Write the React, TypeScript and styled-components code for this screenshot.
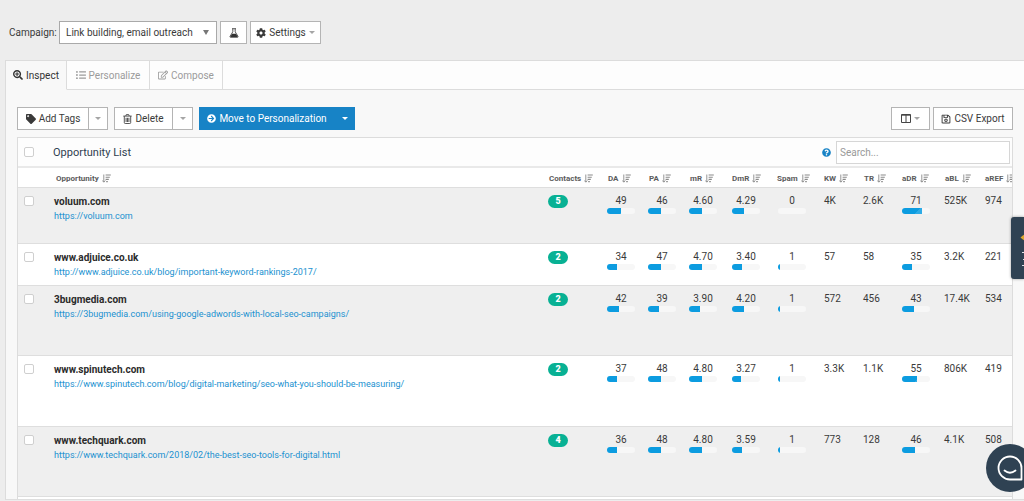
import React from 'react';
import styled, { createGlobalStyle } from 'styled-components';
import {
  FaArrowCircleRight,
  FaCog,
  FaListUl,
  FaQuestionCircle,
  FaRegEdit,
  FaRegSave,
  FaSearchPlus,
  FaTag,
} from 'react-icons/fa';

const GlobalStyle = createGlobalStyle`
  *, *::before, *::after { box-sizing: border-box; }
  body { margin: 0; background: #ededed; overflow: hidden; }
  body, button, input, select { font-family: Roboto, "Liberation Sans", sans-serif; font-size: 10px; color: #3a3a3a; }
  button, input, select { margin: 0; padding: 0; }
  svg { display: block; flex: none; }
`;

const Page = styled.div`
  display: flex;
  flex-direction: column;
`;

const CampaignBar = styled.header`
  display: flex;
  align-items: center;
  gap: 3px;
  padding: 21px 9px 16px;
`;

const CampaignLabel = styled.label`
  width: 47px;
  white-space: nowrap;
`;

const SelectBox = styled.div`
  display: flex;
  align-items: center;
  width: 158px;
  height: 23px;
  padding: 0 7px 0 6px;
  border: 1px solid #a9a9a9;
  background: #fff;
`;

const Select = styled.select`
  flex: 1;
  min-width: 0;
  appearance: none;
  border: 0;
  background: transparent;
  outline: 0;
`;

const Button = styled.button<{ $primary?: boolean; $joined?: boolean; $width?: number }>`
  display: flex;
  align-items: center;
  justify-content: center;
  gap: 3px;
  height: 23px;
  width: ${(p) => (p.$width ? `${p.$width}px` : 'auto')};
  border: 1px solid ${(p) => (p.$primary ? '#1783c6' : '#b4b4b4')};
  margin-left: ${(p) => (p.$joined ? '-1px' : '0')};
  background: ${(p) => (p.$primary ? '#1783c6' : '#fff')};
  color: ${(p) => (p.$primary ? '#fff' : '#3a3a3a')};
  white-space: nowrap;
`;

const ButtonGroup = styled.div`
  display: flex;
`;

const Caret = styled.span<{ $color?: string }>`
  border: 3px solid transparent;
  border-top-color: ${(p) => p.$color ?? '#a5a5a5'};
  border-bottom: 0;
`;

const SelectCaret = styled(Caret)`
  border-top-width: 5px;
`;

const Tabs = styled.nav`
  display: flex;
  margin-left: 5px;
  border-top: 1px solid #dcdcdc;
  border-left: 1px solid #dcdcdc;
  background: #fdfdfd;
`;

const Tab = styled.button<{ $active?: boolean; $width: number }>`
  display: flex;
  align-items: center;
  justify-content: center;
  gap: 3px;
  width: ${(p) => p.$width}px;
  height: 29px;
  border: 0;
  border-right: 1px solid #dcdcdc;
  border-bottom: 1px solid ${(p) => (p.$active ? '#f8f8f8' : '#dcdcdc')};
  background: ${(p) => (p.$active ? '#f8f8f8' : '#fdfdfd')};
  color: ${(p) => (p.$active ? '#333' : '#9b9b9b')};
`;

const TabFill = styled.div`
  flex: 1;
  border-bottom: 1px solid #dcdcdc;
`;

const Content = styled.main`
  margin-left: 5px;
  padding: 17px 11px 0;
  border-left: 1px solid #dcdcdc;
  border-bottom: 1px solid #dedede;
  background: #f8f8f8;
`;

const Toolbar = styled.div`
  display: flex;
  gap: 6px;
  margin-bottom: 7px;
`;

const ToolbarEnd = styled.div`
  display: flex;
  gap: 3px;
  margin-left: auto;
`;

const Panel = styled.section`
  overflow: hidden;
  padding-bottom: 2px;
  border: 1px solid #dcdcdc;
  border-bottom: 0;
  background: #fff;
`;

const PanelHead = styled.div`
  display: flex;
  align-items: center;
  height: 30px;
  padding: 0 2px 0 6px;
  border-bottom: 2px solid #e9e9e9;
  background: #fdfdfd;
`;

const PanelTitle = styled.h1`
  flex: 1;
  margin: 0 0 0 19px;
  font-size: 11px;
  font-weight: 400;
  color: #2f4050;
`;

const Search = styled.input`
  width: 174px;
  height: 23px;
  margin-left: 5px;
  padding: 0 3px;
  border: 1px solid #d6d6d6;
  background: #fff;
  outline: 0;
  &::placeholder { color: #999; opacity: 1; }
`;

const Help = styled.button`
  border: 0;
  background: none;
  svg { color: #1783c6; }
`;

const Checkbox = styled.input`
  display: block;
  appearance: none;
  width: 10px;
  height: 10px;
  border: 1px solid #cfcfcf;
  border-radius: 2px;
  background: #fff;
`;

const Table = styled.table`
  width: 100%;
  table-layout: fixed;
  border-collapse: separate;
  border-spacing: 0;
  border-bottom: 1px solid #dedede;
`;

const Col = styled.col<{ $width?: number }>`
  width: ${(p) => (p.$width ? `${p.$width}px` : 'auto')};
`;

const HeadCell = styled.th<{ $inset?: number }>`
  height: 19px;
  padding: 2px 0 0 ${(p) => p.$inset ?? 6}px;
  overflow: hidden;
`;

const HeadLabel = styled.div`
  display: flex;
  align-items: center;
  gap: 3px;
  font-size: 8px;
  line-height: 12px;
  font-weight: 700;
  color: #5c5c5c;
  white-space: nowrap;
`;

const Row = styled.tr<{ $shaded?: boolean; $height: number }>`
  height: ${(p) => p.$height}px;
  background: ${(p) => (p.$shaded ? '#efefef' : '#fff')};
`;

const Cell = styled.td<{ $check?: boolean }>`
  padding: ${(p) => (p.$check ? '8px 0 0 6px' : '6px 0 0 5px')};
  border-top: 1px solid #dedede;
  vertical-align: top;
  line-height: 14px;
  white-space: nowrap;
`;

const Site = styled.div`
  padding-left: 1px;
  line-height: 15px;
  font-weight: 700;
  color: #2b2b2b;
`;

const SiteLink = styled.a`
  display: block;
  padding-left: 1px;
  font-size: 9px;
  color: #2191d0;
  text-decoration: none;
`;

const Pill = styled.span`
  display: block;
  width: 20px;
  height: 13px;
  margin-top: 1px;
  border-radius: 7px;
  background: #08b194;
  color: #fff;
  font-size: 9px;
  line-height: 13px;
  font-weight: 900;
  text-align: center;
`;

const Gauge = styled.div`
  width: 28px;
  text-align: center;
`;

const Track = styled.div`
  height: 6px;
  border-radius: 3px;
  background: #f7f7f7;
  overflow: hidden;
`;

const Fill = styled.div`
  height: 6px;
  background: linear-gradient(135deg, #0c9ce0 13px, #2eabe6 13px);
`;

const SideTab = styled.button`
  position: fixed;
  right: 0;
  top: 217px;
  width: 13px;
  height: 62px;
  border: 0;
  border-radius: 3px 0 0 3px;
  background: #2f4253;
  box-shadow: 0 0 3px rgba(0, 0, 0, 0.4);
`;

const ChatButton = styled.button`
  position: fixed;
  right: -10px;
  top: 444px;
  width: 48px;
  height: 48px;
  padding-left: 11px;
  border: 0;
  border-radius: 50%;
  background: #2f4253;
`;

const SortIcon = () => (
  <svg width="9" height="9" viewBox="0 0 9 9" fill="none" stroke="#8a8a8a">
    <path d="M1.8 0.5V8M0.3 6.5L1.8 8.2L3.3 6.5" strokeWidth="0.9" />
    <path d="M3.6 1H8.8M3.6 3.2H7.8M3.6 5.4H6.8M4.2 7.6H5.8" strokeWidth="1.1" />
  </svg>
);

const FlaskIcon = () => (
  <svg width="10" height="10" viewBox="0 0 10 10">
    <path d="M3 .7H7M3.8.7V3.8L1 8.4Q.7 9.3 1.6 9.3H8.4Q9.3 9.3 9 8.4L6.2 3.8V.7" fill="none" stroke="#333" strokeWidth="0.8" />
    <path d="M3 5.8H7L8.8 9H1.2Z" fill="#333" />
  </svg>
);

const TrashIcon = () => (
  <svg width="9" height="10" viewBox="0 0 9 10" fill="none" stroke="#444" strokeWidth="0.9">
    <path d="M.3 2.1H8.7M2.8 2L3.3.6H5.7L6.2 2M1.3 2.1V8.6Q1.3 9.5 2.2 9.5H6.8Q7.7 9.5 7.7 8.6V2.1M3.1 3.8V8M4.5 3.8V8M5.9 3.8V8" />
  </svg>
);

const ColumnsIcon = () => (
  <svg width="10" height="9" viewBox="0 0 10 9" fill="none" stroke="#444">
    <path d="M.5.5H9.500V8.500H.5ZM5 .5V8.500M.5 1.2H9.500" />
  </svg>
);

const ChatIcon = () => (
  <svg width="26" height="26" viewBox="0 0 26 26" fill="none" stroke="#fff" strokeWidth="1.800">
    <path d="M13 1.5A11.5 11.5 0 1 0 13 24.5H24.5V13A11.5 11.5 0 0 0 13 1.5Z" strokeLinejoin="round" />
    <path d="M7.5 15.5Q13 20 18.5 15.5" strokeLinecap="round" />
  </svg>
);

const SideTabIcon = () => (
  <svg width="13" height="62" viewBox="0 0 13 62">
    <path d="M9.500 20.500L11.500 18.800L13 17.800V23.200L11.500 22.200Z" fill="#dba52c" />
    <path d="M11 35.500H13M12 42.500H13M11 48.500H13" stroke="#dfe4e8" />
  </svg>
);

const columns = [
  { label: 'Contacts', width: 59, inset: 6 },
  { label: 'DA', width: 41 },
  { label: 'PA', width: 41 },
  { label: 'mR', width: 43 },
  { label: 'DmR', width: 46, inset: 5 },
  { label: 'Spam', width: 46, inset: 4 },
  { label: 'KW', width: 39, inset: 5 },
  { label: 'TR', width: 39 },
  { label: 'aDR', width: 42, inset: 5 },
  { label: 'aBL', width: 41 },
  { label: 'aREF', width: 32, inset: 5 },
];

type SiteData = {
  name: string;
  url: string;
  contacts: number;
  height: number;
  gauges: [string, number][];
  kw: string;
  tr: string;
  adr: number;
  abl: string;
  aref: string;
};

const site = (
  name: string, url: string, contacts: number, height: number,
  da: number, pa: number, mr: string, dmr: string, spam: number,
  kw: string, tr: string, adr: number, abl: string, aref: string,
): SiteData => ({
  name, url, contacts, height, kw, tr, adr, abl, aref,
  gauges: [
    [`${da}`, da],
    [`${pa}`, pa],
    [mr, Number(mr) * 10],
    [dmr, Number(dmr) * 10],
    [`${spam}`, spam * 6],
  ],
});

const sites: SiteData[] = [
  site('voluum.com', 'https://voluum.com', 5, 56, 49, 46, '4.60', '4.29', 0, '4K', '2.6K', 71, '525K', '974'),
  site('www.adjuice.co.uk', 'http://www.adjuice.co.uk/blog/important-keyword-rankings-2017/', 2, 42, 34, 47, '4.70', '3.40', 1, '57', '58', 35, '3.2K', '221'),
  site('3bugmedia.com', 'https://3bugmedia.com/using-google-adwords-with-local-seo-campaigns/', 2, 70, 42, 39, '3.90', '4.20', 1, '572', '456', 43, '17.4K', '534'),
  site('www.spinutech.com', 'https://www.spinutech.com/blog/digital-marketing/seo-what-you-should-be-measuring/', 2, 71, 37, 48, '4.80', '3.27', 1, '3.3K', '1.1K', 55, '806K', '419'),
  site('www.techquark.com', 'https://www.techquark.com/2018/02/the-best-seo-tools-for-digital.html', 4, 70, 36, 48, '4.80', '3.59', 1, '773', '128', 46, '4.1K', '508'),
];

const GaugeCell = ({ text, percent }: { text: string; percent: number }) => (
  <Cell>
    <Gauge>
      {text}
      <Track>
        <Fill style={{ width: `${percent}%` }} />
      </Track>
    </Gauge>
  </Cell>
);

export default function App() {
  return (
    <Page>
      <GlobalStyle />
      <CampaignBar>
        <CampaignLabel htmlFor="campaign">Campaign:</CampaignLabel>
        <SelectBox>
          <Select id="campaign">
            <option>Link building, email outreach</option>
          </Select>
          <SelectCaret $color="#777" />
        </SelectBox>
        <Button $width={27} aria-label="Experiments"><FlaskIcon /></Button>
        <Button $width={71}><FaCog size={10} />Settings<Caret /></Button>
      </CampaignBar>

      <Tabs>
        <Tab $active $width={61}><FaSearchPlus size={10} />Inspect</Tab>
        <Tab $width={83}><FaListUl size={10} />Personalize</Tab>
        <Tab $width={73}><FaRegEdit size={10} />Compose</Tab>
        <TabFill />
      </Tabs>

      <Content>
        <Toolbar>
          <ButtonGroup>
            <Button $width={72}><FaTag size={10} />Add Tags</Button>
            <Button $joined $width={20} aria-label="More tag actions"><Caret /></Button>
          </ButtonGroup>
          <ButtonGroup>
            <Button $width={59}><TrashIcon />Delete</Button>
            <Button $joined $width={21} aria-label="More delete actions"><Caret /></Button>
          </ButtonGroup>
          <ButtonGroup>
            <Button $primary $width={136}><FaArrowCircleRight size={9} />Move to Personalization</Button>
            <Button $primary $width={20} aria-label="More move actions"><Caret $color="#fff" /></Button>
          </ButtonGroup>
          <ToolbarEnd>
            <Button $width={39} aria-label="Columns"><ColumnsIcon /><Caret /></Button>
            <Button $width={80}><FaRegSave size={10} />CSV Export</Button>
          </ToolbarEnd>
        </Toolbar>

        <Panel>
          <PanelHead>
            <Checkbox type="checkbox" aria-label="Select all" />
            <PanelTitle>Opportunity List</PanelTitle>
            <Help aria-label="Help"><FaQuestionCircle size={9} /></Help>
            <Search type="search" placeholder="Search..." aria-label="Search" />
          </PanelHead>
          <Table>
            <colgroup>
              <Col $width={30} />
              <Col />
              {columns.map((c) => <Col key={c.label} $width={c.width} />)}
            </colgroup>
            <thead>
              <tr>
                <HeadCell />
                <HeadCell $inset={8}><HeadLabel>Opportunity<SortIcon /></HeadLabel></HeadCell>
                {columns.map((c) => (
                  <HeadCell key={c.label} $inset={c.inset}>
                    <HeadLabel>{c.label}<SortIcon /></HeadLabel>
                  </HeadCell>
                ))}
              </tr>
            </thead>
            <tbody>
              {sites.map((s, i) => (
                <Row key={s.name} $shaded={i % 2 === 0} $height={s.height}>
                  <Cell $check><Checkbox type="checkbox" aria-label={`Select ${s.name}`} /></Cell>
                  <Cell>
                    <Site>{s.name}</Site>
                    <SiteLink href={s.url}>{s.url}</SiteLink>
                  </Cell>
                  <Cell><Pill>{s.contacts}</Pill></Cell>
                  {s.gauges.map(([text, percent], g) => <GaugeCell key={g} text={text} percent={percent} />)}
                  <Cell>{s.kw}</Cell>
                  <Cell>{s.tr}</Cell>
                  <GaugeCell text={`${s.adr}`} percent={s.adr} />
                  <Cell>{s.abl}</Cell>
                  <Cell>{s.aref}</Cell>
                </Row>
              ))}
            </tbody>
          </Table>
        </Panel>
      </Content>

      <SideTab aria-label="Open side panel"><SideTabIcon /></SideTab>
      <ChatButton aria-label="Chat"><ChatIcon /></ChatButton>
    </Page>
  );
}
